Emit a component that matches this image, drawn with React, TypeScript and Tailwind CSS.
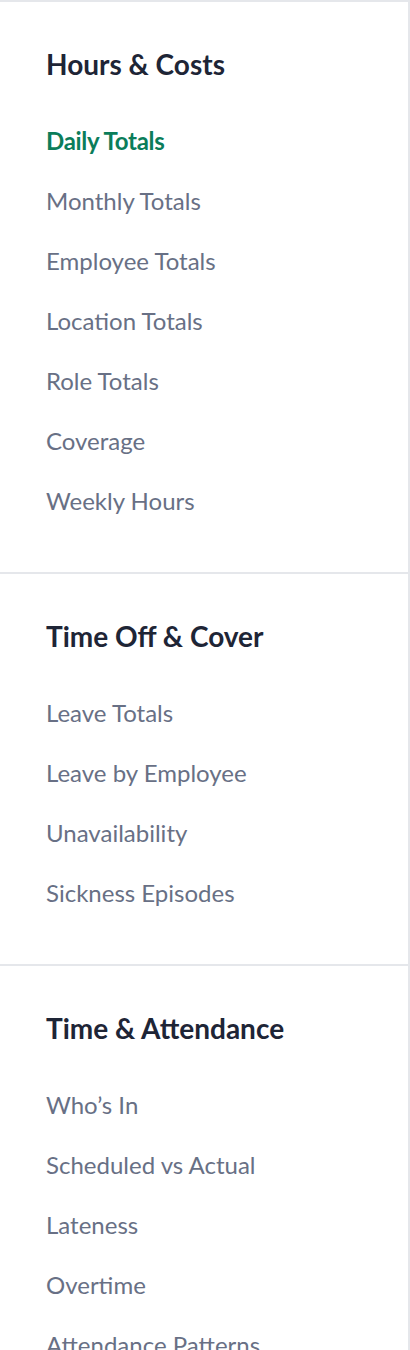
const sections = [
  {
    title: "Hours & Costs",
    items: [
      "Daily Totals",
      "Monthly Totals",
      "Employee Totals",
      "Location Totals",
      "Role Totals",
      "Coverage",
      "Weekly Hours",
    ],
  },
  {
    title: "Time Off & Cover",
    items: ["Leave Totals", "Leave by Employee", "Unavailability", "Sickness Episodes"],
  },
  {
    title: "Time & Attendance",
    items: [
      "Who\u2019s In",
      "Scheduled vs Actual",
      "Lateness",
      "Overtime",
      "Attendance Patterns",
    ],
  },
];

const active = "Daily Totals";

export default function App() {
  return (
    <div className="min-h-[1350px] bg-white font-['Lato','Noto_Sans',sans-serif]">
      <nav className="w-[410px] border-t-2 border-r-2 border-[#e5e7eb]">
        {sections.map((section, i) => (
          <section
            key={section.title}
            className={`px-[46px] pt-[38px] pb-[41px] ${i > 0 ? "border-t-2 border-[#e5e7eb]" : ""}`}
          >
            <h2 className="text-[28px] font-bold leading-[48px] text-[#1e2536]">
              {section.title}
            </h2>
            <ul className="mt-[23px]">
              {section.items.map((item) => (
                <li
                  key={item}
                  className={
                    item === active
                      ? "text-[24px] font-bold leading-[60px] tracking-[-0.3px] text-[#0b7d5a]"
                      : "text-[24px] leading-[60px] text-[#687085]"
                  }
                >
                  {item}
                </li>
              ))}
            </ul>
          </section>
        ))}
      </nav>
    </div>
  );
}
